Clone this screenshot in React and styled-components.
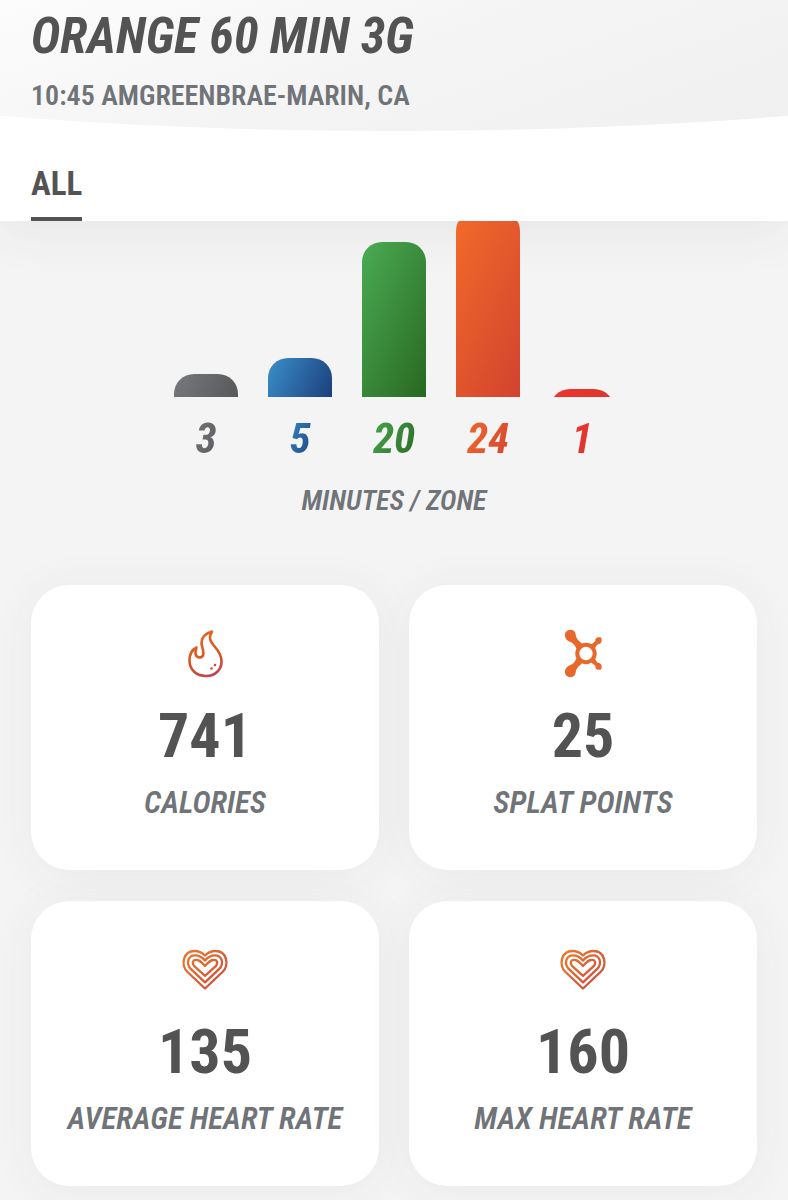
import React, { useState } from "react";
import styled, { createGlobalStyle } from "styled-components";

const GlobalStyle = createGlobalStyle`
  * {
    box-sizing: border-box;
  }

  body {
    margin: 0;
    background-color: #f4f4f4;
    font-family: "Liberation Sans Narrow", "Arial Narrow", "Roboto Condensed", "Liberation Sans", sans-serif;
    font-weight: bold;
    color: #535353;
  }
`;

const Page = styled.main`
  min-height: 100vh;
  overflow: hidden;
`;

const TopBar = styled.div`
  background-color: #ffffff;
  box-shadow: 0 8px 50px rgba(60, 60, 80, 0.08);
`;

const Header = styled.header`
  height: 131px;
  padding: 4px 31px 0;
  background: linear-gradient(160deg, #fcfcfc 0%, #f4f4f4 50%, #f0f0f1 100%);
  clip-path: ellipse(107% 100% at 50% 0);
`;

const Title = styled.h1`
  margin: 0;
  font-size: 50px;
  line-height: 64px;
  font-style: italic;
  white-space: nowrap;
`;

const Subtitle = styled.p`
  margin: 0;
  font-size: 28px;
  line-height: 56px;
  font-weight: 600;
  color: #707478;
  white-space: nowrap;
`;

const Tabs = styled.nav`
  display: flex;
  height: 90px;
  padding: 0 31px;
  align-items: flex-end;
`;

const Tab = styled.button`
  padding: 0;
  border: none;
  border-bottom: 4px solid ${(props) => (props.$active ? "#535353" : "transparent")};
  border-radius: 2px 2px 0 0;
  background: none;
  font: inherit;
  font-size: 33px;
  line-height: 66px;
  color: inherit;
  cursor: pointer;
`;

const Chart = styled.section`
  display: flex;
  flex-direction: column;
  align-items: center;
`;

const Zones = styled.div`
  display: flex;
  gap: 30px;
`;

const Zone = styled.div`
  width: 64px;
  text-align: center;
`;

const Track = styled.div`
  display: flex;
  height: 176px;
  flex-direction: column;
  justify-content: flex-end;
  overflow: hidden;
`;

const BarClip = styled.div`
  flex: none;
  overflow: hidden;
`;

const Bar = styled.div`
  height: 100%;
  min-height: 22px;
  border-radius: 20px 20px 0 0;
  background: linear-gradient(115deg, ${(props) => props.$from}, ${(props) => props.$to});
`;

const ZoneMinutes = styled.span`
  display: inline-block;
  margin-top: 16px;
  padding: 0 4px;
  font-size: 43px;
  line-height: 50px;
  font-style: italic;
  background: linear-gradient(115deg, ${(props) => props.$from}, ${(props) => props.$to});
  background-clip: text;
  color: transparent;
`;

const Caption = styled.p`
  margin: 0;
  font-size: 31px;
  line-height: 36px;
  font-style: italic;
  font-weight: 600;
  color: #707478;
  text-align: center;
  white-space: nowrap;
`;

const ChartCaption = styled(Caption)`
  margin-top: 20px;
  font-size: 28px;
`;

const Cards = styled.section`
  display: grid;
  grid-template-columns: 1fr 1fr;
  gap: 31px 30px;
  padding: 66px 31px 31px;
`;

const Card = styled.article`
  display: flex;
  height: 285px;
  padding-top: 43px;
  flex-direction: column;
  align-items: center;
  border-radius: 38px;
  background-color: #ffffff;
  box-shadow: 0 4px 48px rgba(60, 60, 90, 0.06);
`;

const Value = styled.p`
  margin: 20px 0 13px;
  font-size: 62px;
  line-height: 72px;
`;

const Icon = styled.svg`
  flex: none;
  width: 52px;
  height: 52px;
`;

const FlameIcon = () => (
  <Icon viewBox="0 0 52 52" fill="none" aria-hidden="true">
    <defs>
      <linearGradient id="flame" x1="16" y1="2" x2="34" y2="50" gradientUnits="userSpaceOnUse">
        <stop offset="0" stopColor="#ea6a1f" />
        <stop offset="0.6" stopColor="#d9531f" />
        <stop offset="1" stopColor="#bd4056" />
      </linearGradient>
    </defs>
    <path
      d="M33 3.500C25.500 5.500 22.500 10 22.500 15.500C23 20 25.500 24 24 27.500C22 31 16.500 29.500 16.500 25C16.500 22.500 17 21 17.500 19.500C12.500 22 10.500 27.500 10.500 32.500C10.500 42 17.500 48 27 48C36.500 48 42.500 41.500 42.500 33.500C42.500 27 40 23.500 36 19C30.500 13 29.500 9 33 3.500Z"
      stroke="url(#flame)"
      strokeWidth="2.6"
      strokeLinejoin="round"
    />
    <circle cx="36" cy="37" r="1.3" fill="#c94a3c" />
    <circle cx="32.5" cy="40.5" r="1.3" fill="#c94a3c" />
  </Icon>
);

const SplatIcon = () => (
  <Icon viewBox="0 0 52 52" fill="none" aria-hidden="true">
    <g fill="#e8672a">
      <path d="M8.500 4.500C11 0.500 17.500 1 18.500 5.500C19 9 19.500 11.500 25 15.500L20 21.500C17 15.500 15 14.500 12.500 13.500C8.500 12 7 7.500 8.500 4.500Z" />
      <path d="M8.500 46.500C11 50.500 17.500 50 18.500 45.500C19 42 19.500 39.500 25 35.500L20 29.500C17 35.500 15 36.500 12.500 37.500C8.500 39 7 43.500 8.500 46.500Z" />
      <path d="M33 17.500L38.500 13C37.500 10 41 8.500 44 9.500C45.500 12 44.500 15.500 42 16C39.500 16.500 39.500 18 37.500 21Z" />
      <path d="M33 33.500L38.500 38C37.500 41 41 42.500 44 41.500C45.500 39 44.500 35.500 42 35C39.500 34.500 39.500 33 37.500 30Z" />
    </g>
    <circle cx="29" cy="25.500" r="8.700" stroke="#e8672a" strokeWidth="4" />
  </Icon>
);

const HeartIcon = ({ id }) => (
  <Icon viewBox="0 0 52 52" fill="none" aria-hidden="true">
    <defs>
      <linearGradient id={id} x1="8" y1="6" x2="42" y2="44" gradientUnits="userSpaceOnUse">
        <stop offset="0" stopColor="#ea7a2c" />
        <stop offset="1" stopColor="#cf4a3c" />
      </linearGradient>
    </defs>
    <g stroke={`url(#${id})`} strokeWidth="2.3" strokeLinejoin="round">
      <path d="M26 44.500L8.500 28C1.500 21 4 7 15.500 7C20 7 23.500 9 26 11.500C28.500 9 32 7 36.500 7C48 7 50.500 21 43.500 28Z" />
      <path d="M26 38.300L12 25.200C6.500 19.500 9 11.400 16 11.400C20 11.400 23.500 13.500 26 16.500C28.500 13.500 32 11.400 36 11.400C43 11.400 45.500 19.500 40 25.200Z" />
      <path d="M26 31.800L15 21.800C12.500 18.500 14 15.800 17 15.800C20.500 15.800 22 17.800 26 22C30 17.800 31.500 15.800 35 15.800C38 15.800 39.500 18.500 37 21.800Z" />
    </g>
  </Icon>
);

const zones = [
  { minutes: 3, from: "#77797d", to: "#56585a" },
  { minutes: 5, from: "#3b8fca", to: "#1b3f7d" },
  { minutes: 20, from: "#4bab54", to: "#286820" },
  { minutes: 24, from: "#f26b2a", to: "#d2432f" },
  { minutes: 1, from: "#f0352b", to: "#d93530" },
];

const stats = [
  { label: "CALORIES", value: 741, icon: <FlameIcon /> },
  { label: "SPLAT POINTS", value: 25, icon: <SplatIcon /> },
  { label: "AVERAGE HEART RATE", value: 135, icon: <HeartIcon id="avg-heart" /> },
  { label: "MAX HEART RATE", value: 160, icon: <HeartIcon id="max-heart" /> },
];

// bar height for one minute
const BAR_SCALE = 7.75;

const App = () => {
  const [tab, setTab] = useState("ALL");

  return (
    <Page>
      <GlobalStyle />
      <TopBar>
        <Header>
          <Title>ORANGE 60 MIN 3G</Title>
          <Subtitle>
            <span>10:45 AM</span>
            <span>GREENBRAE-MARIN, CA</span>
          </Subtitle>
        </Header>
        <Tabs>
          <Tab type="button" $active={tab === "ALL"} onClick={() => setTab("ALL")}>
            ALL
          </Tab>
        </Tabs>
      </TopBar>
      <Chart>
        <Zones>
          {zones.map((zone) => (
            <Zone key={zone.minutes}>
              <Track>
                <BarClip style={{ height: Math.round(zone.minutes * BAR_SCALE) }}>
                  <Bar $from={zone.from} $to={zone.to} />
                </BarClip>
              </Track>
              <ZoneMinutes $from={zone.from} $to={zone.to}>
                {zone.minutes}
              </ZoneMinutes>
            </Zone>
          ))}
        </Zones>
        <ChartCaption>MINUTES / ZONE</ChartCaption>
      </Chart>
      <Cards>
        {stats.map((stat) => (
          <Card key={stat.label}>
            {stat.icon}
            <Value>{stat.value}</Value>
            <Caption>{stat.label}</Caption>
          </Card>
        ))}
      </Cards>
    </Page>
  );
};

export default App;
